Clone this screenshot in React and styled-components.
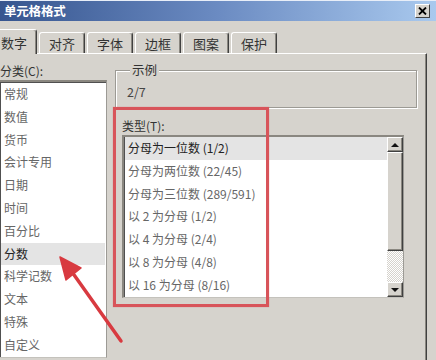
import React from 'react';
import styled, { createGlobalStyle } from 'styled-components';

const GlobalStyle = createGlobalStyle`
  html, body {
    margin: 0;
    padding: 0;
    background: #d6d3cd;
  }
  * {
    box-sizing: border-box;
  }
`;

const Frame = styled.div`
  position: relative;
  width: 436px;
  height: 360px;
  overflow: hidden;
  background: #d6d3cd;
  font-family: 'Noto Sans CJK SC', 'Noto Sans', sans-serif;
  font-size: 12px;
  color: #333;
`;

const TitleBar = styled.div`
  height: 21px;
  display: flex;
  align-items: center;
  justify-content: space-between;
  padding: 0 6px 0 4px;
  background: linear-gradient(90deg, #36558f 0%, #6b8bc2 50%, #a9c9ee 100%);
  border-top: 1px solid #e8eef8;
`;

const Title = styled.span`
  color: #fff;
  font-weight: bold;
  font-size: 12.5px;
  line-height: 20px;
  letter-spacing: -0.2px;
`;

const CloseButton = styled.div`
  width: 15px;
  height: 14px;
  display: flex;
  align-items: center;
  justify-content: center;
  background: #d6d3cd;
  border-top: 1px solid #fff;
  border-left: 1px solid #fff;
  border-right: 1px solid #404040;
  border-bottom: 1px solid #404040;
`;

const TabStrip = styled.div`
  display: flex;
  align-items: flex-end;
  gap: 2px;
  height: 24px;
  margin: 8px 0 0 -9px;
  position: relative;
  z-index: 1;
`;

const Tab = styled.div`
  width: 46px;
  height: ${(p) => (p.$active ? '25px' : '21px')};
  margin-bottom: ${(p) => (p.$active ? '-1px' : '0')};
  display: flex;
  align-items: center;
  justify-content: center;
  padding-top: ${(p) => (p.$active ? '0' : '1px')};
  font-size: 13px;
  color: #333;
  background: #d6d3cd;
  border-top: 1px solid #fff;
  border-left: 1px solid #fff;
  border-right: 1px solid #404040;
  border-radius: 3px 3px 0 0;
  box-shadow: inset -1px 0 0 #8a8780;
`;

const Panel = styled.div`
  display: flex;
  gap: 8px;
  width: 436px;
  height: 320px;
  margin-left: -9px;
  padding: 7px 2px 0 6px;
  border-top: 1px solid #fff;
  border-left: 1px solid #fff;
  border-right: 1px solid #404040;
  box-shadow: inset -1px 0 0 #8a8780;
`;

const LeftColumn = styled.div`
  width: 109px;
  display: flex;
  flex-direction: column;
`;

const RightColumn = styled.div`
  flex: 1;
  display: flex;
  flex-direction: column;
`;

const FieldLabel = styled.div`
  height: 19px;
  line-height: 19px;
  font-size: 12px;
  color: #333;
  padding-left: ${(p) => p.$indent || 0}px;
  white-space: nowrap;
`;

const ListBox = styled.div`
  position: relative;
  background: #fff;
  border-top: 2px solid #8a8780;
  border-left: 2px solid #8a8780;
  border-right: 1px solid #9c9a95;
  border-bottom: 1px solid #c4c2bc;
  box-shadow: inset 1px 1px 0 #505050;
  overflow: hidden;
`;

const CategoryList = styled(ListBox)`
  height: 278px;
  padding: 1px 0 0 1px;
`;

const Item = styled.div`
  height: 22.8px;
  line-height: 22.8px;
  padding-left: 3px;
  margin-right: ${(p) => p.$gap || 0}px;
  font-size: 12px;
  white-space: nowrap;
  color: ${(p) => (p.$selected ? '#222' : '#666')};
  background: ${(p) => (p.$selected ? '#e4e4e4' : 'transparent')};
`;

const SampleGroup = styled.fieldset`
  margin: 1px 7px 0 0;
  padding: 5px 0 6px 11px;
  min-width: 0;
  border: 1px solid #9c9a94;
  box-shadow: inset 1px 1px 0 #fff, 1px 1px 0 #fff;
`;

const Legend = styled.legend`
  padding: 0 2px;
  margin-left: 3px;
  font-size: 12.5px;
  line-height: 16px;
  color: #333;
  background: #d6d3cd;
`;

const SampleValue = styled.div`
  height: 18px;
  line-height: 18px;
  font-size: 12.5px;
  color: #444;
`;

const TypeSection = styled.div`
  margin-top: 8px;
  display: flex;
  flex-direction: column;
`;

const TypeList = styled(ListBox)`
  width: 282px;
  height: 163px;
  margin: 0 0 0 7px;
  display: flex;
`;

const TypeItems = styled.div`
  flex: 1;
  padding-left: 1px;
`;

const ScrollBar = styled.div`
  width: 16px;
  display: flex;
  flex-direction: column;
`;

const ScrollButton = styled.div`
  height: 15px;
  display: flex;
  align-items: center;
  justify-content: center;
  background: #d6d3cd;
  border-top: 1px solid #fff;
  border-left: 1px solid #fff;
  border-right: 1px solid #404040;
  border-bottom: 1px solid #404040;
  box-shadow: inset -1px -1px 0 #8a8780;
`;

const Thumb = styled(ScrollButton)`
  height: 99px;
`;

const Track = styled.div`
  flex: 1;
  background-color: #fff;
  background-image: repeating-conic-gradient(#d6d3cd 0 25%, #fff 0 50%);
  background-size: 2px 2px;
`;

const Arrow = styled.span`
  width: 0;
  height: 0;
  border-left: 4px solid transparent;
  border-right: 4px solid transparent;
  ${(p) => (p.$down ? 'border-top: 4px solid #111;' : 'border-bottom: 4px solid #111;')}
`;

const Highlight = styled.div`
  position: absolute;
  left: 113px;
  top: 107px;
  width: 156px;
  height: 200px;
  border: 3px solid #d8545a;
  box-shadow: 0 0 1px rgba(216, 84, 90, 0.6);
  pointer-events: none;
`;

const Overlay = styled.svg`
  position: absolute;
  left: 0;
  top: 0;
  pointer-events: none;
`;

const tabs = ['数字', '对齐', '字体', '边框', '图案', '保护'];
const categories = ['常规', '数值', '货币', '会计专用', '日期', '时间', '百分比', '分数', '科学记数', '文本', '特殊', '自定义'];
const types = [
  '分母为一位数 (1/2)',
  '分母为两位数 (22/45)',
  '分母为三位数 (289/591)',
  '以 2 为分母 (1/2)',
  '以 4 为分母 (2/4)',
  '以 8 为分母 (4/8)',
  '以 16 为分母 (8/16)',
];

export default function App() {
  return (
    <Frame>
      <GlobalStyle />
      <TitleBar>
        <Title>单元格格式</Title>
        <CloseButton>
          <svg width="9" height="8" viewBox="0 0 9 8">
            <path d="M1 0.5 L8 7.5 M8 0.5 L1 7.5" stroke="#000" strokeWidth="1.8" />
          </svg>
        </CloseButton>
      </TitleBar>

      <TabStrip>
        {tabs.map((t, i) => (
          <Tab key={t} $active={i === 0}>{t}</Tab>
        ))}
      </TabStrip>

      <Panel>
        <LeftColumn>
          <FieldLabel $indent={2}>分类(C):</FieldLabel>
          <CategoryList>
            {categories.map((c) => (
              <Item key={c} $selected={c === '分数'} $gap={1}>{c}</Item>
            ))}
          </CategoryList>
        </LeftColumn>

        <RightColumn>
          <SampleGroup>
            <Legend>示例</Legend>
            <SampleValue>2/7</SampleValue>
          </SampleGroup>

          <TypeSection>
            <FieldLabel $indent={7}>类型(T):</FieldLabel>
            <TypeList>
              <TypeItems>
                {types.map((t, i) => (
                  <Item key={t} $selected={i === 0}>{t}</Item>
                ))}
              </TypeItems>
              <ScrollBar>
                <ScrollButton><Arrow /></ScrollButton>
                <Thumb />
                <Track />
                <ScrollButton><Arrow $down /></ScrollButton>
              </ScrollBar>
            </TypeList>
          </TypeSection>
        </RightColumn>
      </Panel>

      <Highlight />
      <Overlay width="436" height="360" viewBox="0 0 436 360">
        <path d="M121 341 L72 272" stroke="#d83a40" strokeWidth="3.5" strokeLinecap="round" />
        <path d="M60 257 L81 268 L66 280 Z" fill="#d83a40" stroke="#d83a40" strokeWidth="1.5" strokeLinejoin="round" />
      </Overlay>
    </Frame>
  );
}
